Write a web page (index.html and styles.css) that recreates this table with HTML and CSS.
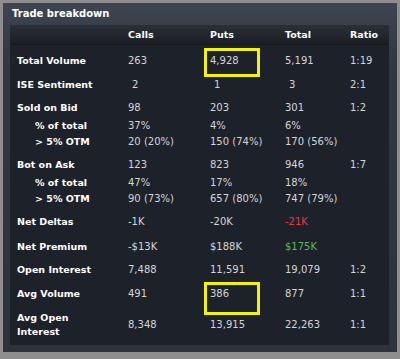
FILE: index.html
```html
<!DOCTYPE html>
<html>
<head>
<meta charset="utf-8">
<link rel="stylesheet" href="styles.css">
</head>
<body>
<div class="frame">
  <div class="panel">
    <div class="title">Trade breakdown</div>
    <div class="table">
      <div class="head grid">
        <span></span><span>Calls</span><span>Puts</span><span>Total</span><span>Ratio</span>
      </div>
      <div class="body">
        <div class="row grid"><span class="lbl">Total Volume</span><span>263</span><span class="boxed">4,928</span><span>5,191</span><span>1:19</span></div>
        <div class="row grid"><span class="lbl">ISE Sentiment</span><span class="nudge">2</span><span class="nudge">1</span><span class="nudge">3</span><span>2:1</span></div>
        <div class="row tight grid"><span class="lbl">Sold on Bid</span><span>98</span><span>203</span><span>301</span><span>1:2</span></div>
        <div class="row sub grid"><span class="lbl ind">% of total</span><span>37%</span><span>4%</span><span>6%</span><span></span></div>
        <div class="row sub2 grid"><span class="lbl ind">&gt; 5% OTM</span><span>20 (20%)</span><span>150 (74%)</span><span>170 (56%)</span><span></span></div>
        <div class="row tight grid"><span class="lbl">Bot on Ask</span><span>123</span><span>823</span><span>946</span><span>1:7</span></div>
        <div class="row sub grid"><span class="lbl ind">% of total</span><span>47%</span><span>17%</span><span>18%</span><span></span></div>
        <div class="row sub2 grid"><span class="lbl ind">&gt; 5% OTM</span><span>90 (73%)</span><span>657 (80%)</span><span>747 (79%)</span><span></span></div>
        <div class="row tight grid"><span class="lbl">Net Deltas</span><span>-1K</span><span>-20K</span><span class="neg">-21K</span><span></span></div>
        <div class="row loose grid"><span class="lbl">Net Premium</span><span>-$13K</span><span>$188K</span><span class="pos">$175K</span><span></span></div>
        <div class="row tight grid"><span class="lbl">Open Interest</span><span>7,488</span><span>11,591</span><span>19,079</span><span>1:2</span></div>
        <div class="row grid"><span class="lbl">Avg Volume</span><span>491</span><span class="boxed boxed2">386</span><span>877</span><span>1:1</span></div>
        <div class="row loose two grid"><span class="lbl">Avg Open<br>Interest</span><span>8,348</span><span>13,915</span><span>22,263</span><span>1:1</span></div>
      </div>
    </div>
  </div>
</div>
</body>
</html>
```

FILE: styles.css
```css
* { box-sizing: border-box; }
html, body { margin: 0; padding: 0; }
body {
  width: 400px;
  height: 359px;
  overflow: hidden;
  font-family: "DejaVu Sans", Verdana, sans-serif;
}
.frame {
  width: 400px;
  height: 359px;
  background: #8e8e8e;
  padding: 3px 3px 7px 3px;
}
.panel {
  height: 100%;
  background: linear-gradient(#3e4550, #323842 60px, #2d333b);
  padding: 0 8px 7px 7px;
  display: flex;
  flex-direction: column;
}
.title {
  height: 22px;
  line-height: 22px;
  padding-left: 2px;
  color: #ffffff;
  font-weight: bold;
  font-size: 10px;
}
.table {
  flex: 1;
  background: #1d2129;
  color: #d4d6d8;
  font-size: 10px;
}
.grid {
  display: grid;
  grid-template-columns: 111px 82px 75px 65px 1fr;
  padding-left: 7px;
  align-items: center;
}
.head {
  height: 20px;
  background: linear-gradient(#2b3038, #1a1e24);
  border-bottom: 1px solid #15181d;
  color: #ffffff;
  font-weight: bold;
  font-size: 9.5px;
}
.row {
  line-height: 16px;
  margin-top: 8px;
}
.row.tight { margin-top: 7px; }
.row.loose { margin-top: 9px; }
.row.sub { margin-top: 2px; }
.row.sub2 { margin-top: 0; }
.row.two .lbl { line-height: 14px; }
.lbl {
  color: #ffffff;
  font-weight: bold;
  font-size: 9.5px;
}
.lbl.ind { padding-left: 18px; }
.nudge { padding-left: 4px; }
.neg { color: #e8393f; }
.pos { color: #5cb85c; }
.boxed { position: relative; }
.boxed::before {
  content: "";
  position: absolute;
  left: -6px;
  top: -5px;
  width: 50px;
  height: 23px;
  border: 3px solid #f4f400;
}
.boxed2::before {
  top: -4px;
  height: 27px;
}
```
